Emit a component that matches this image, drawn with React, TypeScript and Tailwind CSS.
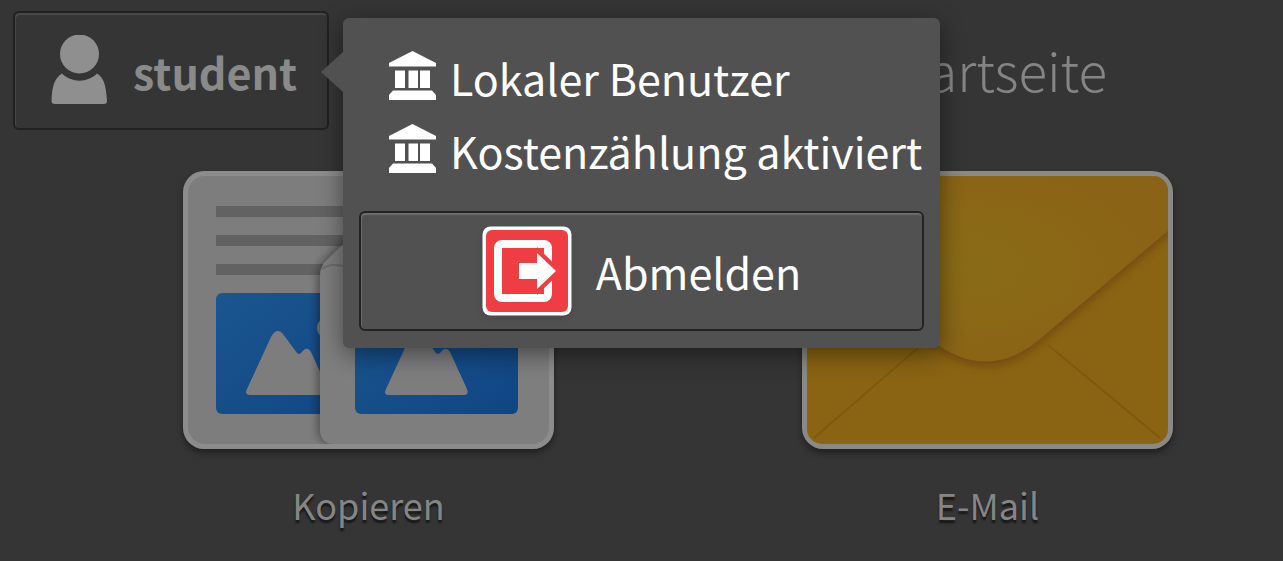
import type { ReactNode } from 'react';

function UserIcon() {
  return (
    <svg className="w-14 h-[72px] shrink-0" viewBox="0 0 56 72" fill="#8f8f8f" aria-hidden="true">
      <circle cx="28.500" cy="19" r="19.500" />
      <path d="M11 38.500 C20 48 37 48 46 38.500 C53 43 55 50 56 66 Q56 69 53 69 H4 Q0.500 69 0.500 66 C1 50 4 43 11 38.500 Z" />
    </svg>
  );
}

function BankIcon() {
  return (
    <svg className="w-[47px] h-[49px] shrink-0" viewBox="0 0 47 49" fill="#fff" aria-hidden="true">
      <path d="M23.500 0 L47 12 V15.500 H0 V12 Z" />
      <rect x="6" y="19.500" width="10" height="17.500" />
      <rect x="19.500" y="19.500" width="9.500" height="17.500" />
      <rect x="31" y="19.500" width="10" height="17.500" />
      <path d="M4 39.500 H43 L47 44 V49 H0 V44 Z" />
    </svg>
  );
}

function LogoutIcon() {
  return (
    <svg className="w-[90px] h-[90px] shrink-0 drop-shadow-md" viewBox="0 0 90 90" aria-hidden="true">
      <rect x="0.500" y="0.500" width="89" height="89" rx="8" fill="#fff" />
      <rect x="4" y="4" width="82" height="82" rx="6" fill="#ee3e43" />
      <rect x="16" y="18" width="50" height="54" rx="4" fill="none" stroke="#fff" strokeWidth="8" />
      <path d="M55 21 L80 45 L55 69 Z" fill="#ee3e43" />
      <path d="M37 37 H55 V27 L74 45 L55 63 V53 H37 Z" fill="#fff" />
    </svg>
  );
}

function CopyTile() {
  return (
    <svg className="block w-full" viewBox="0 0 371 278" aria-hidden="true">
      <defs>
        <linearGradient id="photo" x1="0" y1="0" x2="1" y2="1">
          <stop offset="0" stopColor="#1b568f" />
          <stop offset="1" stopColor="#104584" />
        </linearGradient>
        <filter id="pageShadow" x="-20%" y="-20%" width="140%" height="140%">
          <feDropShadow dx="-3" dy="0" stdDeviation="4" floodColor="#000" floodOpacity="0.35" />
        </filter>
        <clipPath id="copyClip">
          <rect x="5" y="5" width="361" height="268" rx="17" />
        </clipPath>
        <g id="picture">
          <rect x="33" y="122" width="163" height="121" rx="6" fill="url(#photo)" />
          <circle cx="145" cy="157" r="11" fill="#7d7d7d" />
          <path
            d="M64 218 L88 166 Q94 156 100 163 L114 182 Q116 184 118 182 Q124 174 128 181 L145 218 Q147 224 142 224 H67 Q61 224 64 218 Z"
            fill="#7d7d7d"
          />
        </g>
      </defs>
      <rect width="371" height="278" rx="21" fill="#8c8c8c" />
      <rect x="5" y="5" width="361" height="268" rx="17" fill="#7d7d7d" />
      <g clipPath="url(#copyClip)">
        <path d="M33 35 H240 V46 H33 Z M33 64 H240 V75 H33 Z M33 93 H240 V104 H33 Z" fill="#626262" />
        <use href="#picture" />
        <path d="M137 105 Q137 96 143 90 L172 62 H371 V273 H152 Q137 273 137 257 Z" fill="#7e7e7e" filter="url(#pageShadow)" />
        <path d="M139 98 Q146 92 160 95" stroke="#6c6c6c" strokeWidth="2" fill="none" />
        <use href="#picture" x="139" />
      </g>
    </svg>
  );
}

function MailTile() {
  return (
    <svg className="block w-full" viewBox="0 0 371 278" aria-hidden="true">
      <defs>
        <radialGradient id="gold" cx="0.420" cy="0.500" r="0.600">
          <stop offset="0" stopColor="#896c18" />
          <stop offset="0.600" stopColor="#8a6614" />
          <stop offset="1" stopColor="#8a6312" />
        </radialGradient>
        <filter id="flapShadow" x="-10%" y="-10%" width="120%" height="130%">
          <feDropShadow dx="0" dy="5" stdDeviation="4" floodColor="#6b3f08" floodOpacity="0.700" />
        </filter>
        <clipPath id="mailClip">
          <rect x="5" y="5" width="361" height="268" rx="15" />
        </clipPath>
      </defs>
      <rect width="371" height="278" rx="21" fill="#8b8985" />
      <g clipPath="url(#mailClip)">
        <rect width="371" height="278" fill="#8a6413" />
        <path d="M12 267 L125 169 M246 174 L358 267" stroke="#7e5a10" strokeWidth="2" fill="none" />
        <path d="M5 62 L130 170 Q186 212 238 168 L368 58 V0 H5 Z" fill="url(#gold)" filter="url(#flapShadow)" />
      </g>
    </svg>
  );
}

function AppTile({ label, children }: { label: string; children: ReactNode }) {
  return (
    <button type="button" className="w-[371px] flex flex-col items-center gap-[29px]">
      <span className="block w-full rounded-[21px] shadow-[0_4px_6px_rgba(0,0,0,0.4)]">{children}</span>
      <span className="text-[36px] leading-[52px] text-[#858585] [text-shadow:0_3px_2px_rgba(0,0,0,0.6)]">{label}</span>
    </button>
  );
}

function UserPopover() {
  return (
    <div className="absolute left-full top-[7px] ml-[14px] z-10 w-[597px] rounded-md bg-[#515151] px-4 pt-[33px] pb-[17px] shadow-[0_6px_24px_rgba(0,0,0,0.45)]">
      <span className="absolute -left-[22px] top-[34px] border-y-[20px] border-r-[22px] border-y-transparent border-r-[#515151]" />
      <ul className="pl-[30px] text-[43px] leading-[52px] text-white">
        <li className="flex items-start gap-[14px] h-[73px] whitespace-nowrap">
          <BankIcon />
          Lokaler Benutzer
        </li>
        <li className="flex items-start gap-[14px] h-[73px] whitespace-nowrap">
          <BankIcon />
          Kostenzählung aktiviert
        </li>
      </ul>
      <button
        type="button"
        className="mt-[14px] w-full h-[120px] flex items-center justify-center gap-6 rounded-md border-2 border-[#232323] text-[43px] leading-[52px] text-white shadow-[inset_1px_2px_1px_rgba(255,255,255,0.16)]"
      >
        <LogoutIcon />
        Abmelden
      </button>
    </div>
  );
}

export default function App() {
  return (
    <main className="min-h-screen bg-[#353535] font-['Noto_Sans_CJK_SC','Noto_Sans',sans-serif]">
      <header className="flex items-start justify-between pt-[11px] pl-[13px] pr-[176px]">
        <div className="relative">
          <button
            type="button"
            className="w-[316px] h-[119px] flex items-center gap-[26px] pl-9 rounded-md border-2 border-[#212121] text-[43px] leading-[52px] font-bold text-[#8a8a8a] shadow-[inset_1px_2px_1px_rgba(255,255,255,0.1)]"
          >
            <UserIcon />
            student
          </button>
          <UserPopover />
        </div>
        <h1 className="pt-[22px] text-[53px] leading-[72px] font-light text-[#858585]">Startseite</h1>
      </header>
      <nav className="flex justify-between pt-[41px] pl-[183px] pr-[110px]">
        <AppTile label="Kopieren">
          <CopyTile />
        </AppTile>
        <AppTile label="E-Mail">
          <MailTile />
        </AppTile>
      </nav>
    </main>
  );
}
